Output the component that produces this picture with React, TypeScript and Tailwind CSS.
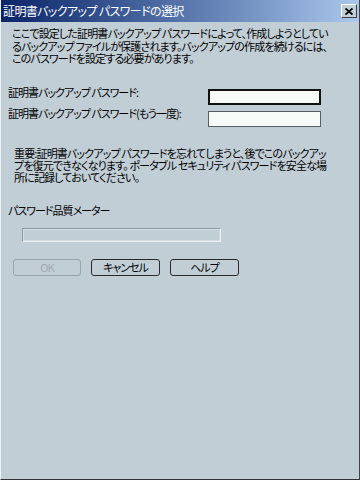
const font = {
  fontFamily: '"Noto Sans CJK JP", "Noto Sans", sans-serif',
  fontFeatureSettings: '"palt"',
};

function Button({ label, disabled }: { label: string; disabled?: boolean }) {
  return (
    <div
      className={
        "flex items-center justify-center h-[17px] rounded-[3px] border-[1.5px] bg-[#c2ced6] text-[11px] leading-none tracking-[-1px] " +
        (disabled
          ? "w-[68px] border-[#9aa4ac] text-[#a0a9b0]"
          : "w-[69px] border-[#2a2a2a] text-black")
      }
    >
      {label}
    </div>
  );
}

export default function App() {
  return (
    <div
      className="w-[360px] h-[480px] flex flex-col bg-[#c2ced6] border-l border-l-[#eef2f4] border-r border-r-[#404448] border-b border-b-[#303438] overflow-hidden text-black"
      style={font}
    >
      <div className="h-[22px] flex items-center justify-between pl-[2px] pr-[2px] bg-gradient-to-r from-[#0c2468] to-[#abc8ec] shrink-0">
        <span className="text-white text-[12px] leading-none tracking-[-0.6px]">
          証明書バックアップ パスワードの選択
        </span>
        <div className="w-[16px] h-[14px] flex items-center justify-center bg-[#c2ced6] border border-t-white border-l-white border-r-[#404040] border-b-[#404040]">
          <svg width="8" height="7" viewBox="0 0 8 7">
            <path d="M0.5 0.5 L7.5 6.5 M7.5 0.5 L0.5 6.5" stroke="black" strokeWidth="1.8" />
          </svg>
        </div>
      </div>

      <div className="mt-[5px] pl-[11px] text-[11px] leading-[12.5px] tracking-[-0.85px] whitespace-nowrap">
        <p>ここで設定した証明書バックアップ パスワードによって、作成しようとしてい</p>
        <p>るバックアップ ファイルが保護されます。バックアップの作成を続けるには、</p>
        <p>このパスワードを設定する必要があります。</p>
      </div>

      <div className="mt-[21px] pl-[7px] text-[11px] leading-[12px] tracking-[-1px] whitespace-nowrap">
        <div className="flex items-start">
          <span className="w-[200px]">証明書バックアップ パスワード:</span>
          <div className="mt-[3px] w-[113px] h-[16px] bg-[#f6fbf7] border-2 border-[#111]" />
        </div>
        <div className="flex items-start mt-[2px]">
          <span className="w-[200px]">証明書バックアップ パスワード(もう一度):</span>
          <div className="mt-[4px] w-[113px] h-[16px] bg-[#f6fbf7] border-[1.5px] border-[#5a5e62]" />
        </div>
      </div>

      <div className="mt-[20px] pl-[13px] text-[11px] leading-[12px] tracking-[-0.85px] whitespace-nowrap">
        <p>重要:証明書バックアップ パスワードを忘れてしまうと、後でこのバックアッ</p>
        <p>プを復元できなくなります。 ポータブル セキュリティ パスワードを安全な場</p>
        <p>所に記録しておいてください。</p>
      </div>

      <p className="mt-[21px] pl-[7px] text-[11px] leading-[12px] tracking-[-1px]">パスワード品質メーター</p>

      <div className="mt-[12px] ml-[21px] w-[199px] h-[14px] border border-t-[#8f9aa2] border-l-[#8f9aa2] border-r-[#e8eef2] border-b-[#e8eef2]">
        <div className="w-full h-full border border-[#d4dde2]" />
      </div>

      <div className="mt-[17px] ml-[12px] flex gap-[10px]">
        <Button label="OK" disabled />
        <Button label="キャンセル" />
        <Button label="ヘルプ" />
      </div>
    </div>
  );
}
